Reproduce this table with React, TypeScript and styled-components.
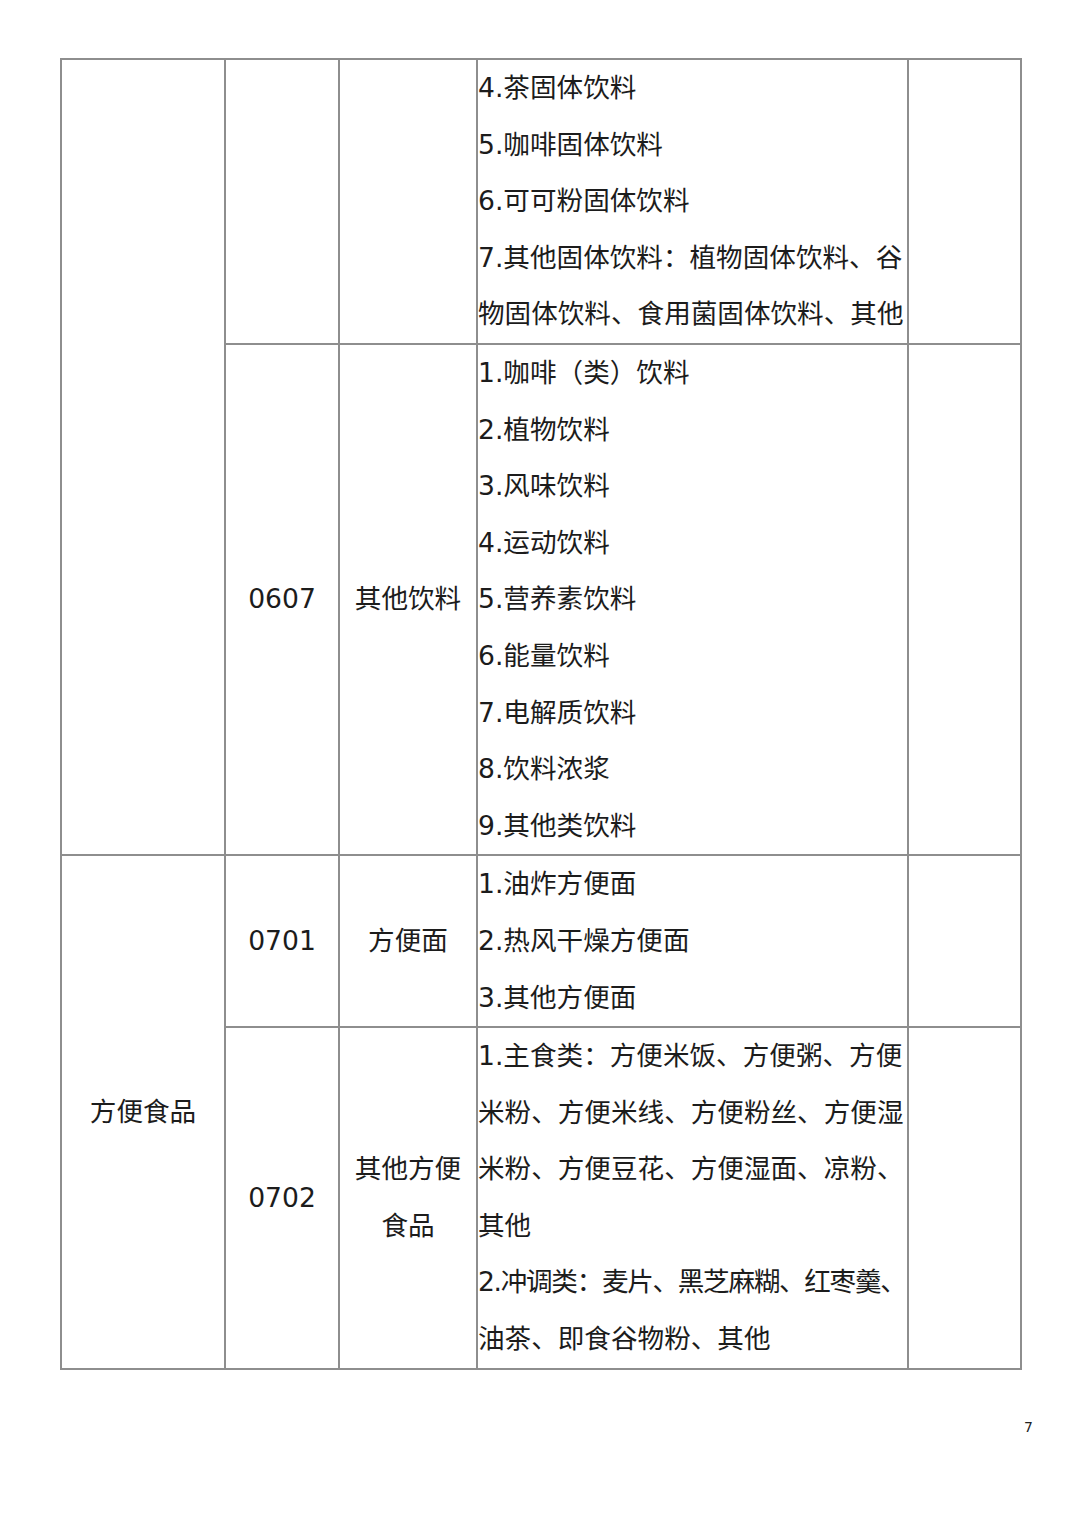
import React from "react"
import styled, { createGlobalStyle } from "styled-components"

const GlobalStyle = createGlobalStyle`
  html, body {
    margin: 0;
    padding: 0;
    background: #ffffff;
  }
  body {
    font-family: "DejaVu Sans", "Noto Sans CJK SC", sans-serif;
    color: #1c1c1c;
  }
`

// 每个分类：编码、名称、细则（已按原文断行）
interface SubCategory {
  code?: string
  name?: string[]
  lines: string[]
}

interface Group {
  title?: string[]
  items: SubCategory[]
}

const groups: Group[] = [
  {
    items: [
      {
        lines: [
          "4.茶固体饮料",
          "5.咖啡固体饮料",
          "6.可可粉固体饮料",
          "7.其他固体饮料：植物固体饮料、谷",
          "物固体饮料、食用菌固体饮料、其他",
        ],
      },
      {
        code: "0607",
        name: ["其他饮料"],
        lines: [
          "1.咖啡（类）饮料",
          "2.植物饮料",
          "3.风味饮料",
          "4.运动饮料",
          "5.营养素饮料",
          "6.能量饮料",
          "7.电解质饮料",
          "8.饮料浓浆",
          "9.其他类饮料",
        ],
      },
    ],
  },
  {
    title: ["方便食品"],
    items: [
      {
        code: "0701",
        name: ["方便面"],
        lines: ["1.油炸方便面", "2.热风干燥方便面", "3.其他方便面"],
      },
      {
        code: "0702",
        name: ["其他方便", "食品"],
        lines: [
          "1.主食类：方便米饭、方便粥、方便",
          "米粉、方便米线、方便粉丝、方便湿",
          "米粉、方便豆花、方便湿面、凉粉、",
          "其他",
          "2.冲调类：麦片、黑芝麻糊、红枣羹、",
          "油茶、即食谷物粉、其他",
        ],
      },
    ],
  },
]

// 超过一行宽度的行稍微收紧字距
const isLong = (s: string) => s.length > 17

const App: React.FC = () => {
  return (
    <Page>
      <GlobalStyle />
      <Table>
        <colgroup>
          <col style={{ width: 164 }} />
          <col style={{ width: 114 }} />
          <col style={{ width: 138 }} />
          <col style={{ width: 431 }} />
          <col style={{ width: 113 }} />
        </colgroup>
        <tbody>
          {groups.map((group, gi) =>
            group.items.map((item, ii) => (
              <tr key={`${gi}-${ii}`}>
                {ii === 0 && (
                  <Cell rowSpan={group.items.length} $align="center">
                    {group.title?.map((t) => <Line key={t}>{t}</Line>)}
                  </Cell>
                )}
                <Cell $align="center">{item.code && <Line>{item.code}</Line>}</Cell>
                <Cell $align="center">
                  {item.name?.map((n) => <Line key={n}>{n}</Line>)}
                </Cell>
                <Cell $align="left">
                  {item.lines.map((l, li) => (
                    <Line key={li} $tight={isLong(l)}>
                      {l}
                    </Line>
                  ))}
                </Cell>
                <Cell $align="center" />
              </tr>
            ))
          )}
        </tbody>
      </Table>
      <PageNumber>7</PageNumber>
    </Page>
  )
}

const Page = styled.div`
  position: relative;
  width: 1080px;
  height: 1527px;
  padding: 58px 0 0 60px;
  box-sizing: border-box;
`

const Table = styled.table`
  border-collapse: collapse;
  table-layout: fixed;
  width: 960px;
`

const Cell = styled.td<{ $align: "left" | "center" }>`
  border: 2px solid #8e8e8e;
  padding: 0;
  text-align: ${(p) => p.$align};
  vertical-align: middle;
  font-size: 26.6px;
  line-height: 56.6px;
  overflow: hidden;
`

const Line = styled.div<{ $tight?: boolean }>`
  white-space: nowrap;
  letter-spacing: ${(p) => (p.$tight ? "-1.3px" : "0")};
`

const PageNumber = styled.div`
  position: absolute;
  left: 1024px;
  top: 1419px;
  font-family: "DejaVu Sans", sans-serif;
  font-size: 14px;
  color: #222;
`

export default App
